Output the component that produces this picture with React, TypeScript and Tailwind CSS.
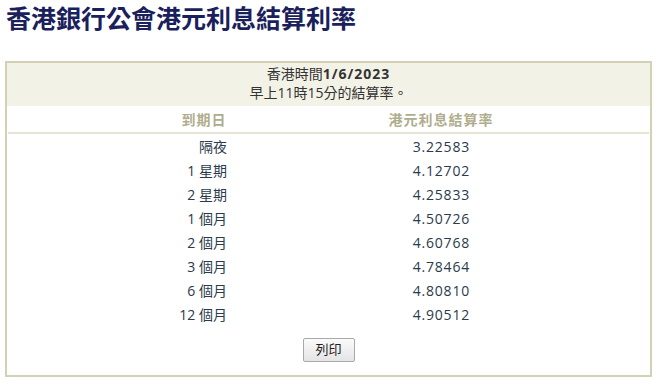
const rows = [
  { term: "隔夜", rate: "3.22583" },
  { term: "1 星期", rate: "4.12702" },
  { term: "2 星期", rate: "4.25833" },
  { term: "1 個月", rate: "4.50726" },
  { term: "2 個月", rate: "4.60768" },
  { term: "3 個月", rate: "4.78464" },
  { term: "6 個月", rate: "4.80810" },
  { term: "12 個月", rate: "4.90512" },
];

export default function App() {
  return (
    <div className="w-[657px] h-[380px] bg-white font-['Open_Sans','Noto_Sans_CJK_TC',sans-serif]">
      {/* page title */}
      <h1 className="pl-[6px] pt-[3px] text-[25px] leading-[30px] font-bold text-[#1b1f5c]">
        香港銀行公會港元利息結算利率
      </h1>

      {/* rate box */}
      <div className="mx-[5px] mt-[28px] h-[316px] border-2 border-[#d3d1b3] flex flex-col">
        <div className="bg-[#f3f2e7] pt-[1px] pb-[4px] text-center text-[14px] leading-[19px] text-[#333]">
          <p>
            香港時間<span className="font-bold tracking-[1px]">1/6/2023</span>
          </p>
          <p>早上11時15分的結算率。</p>
        </div>

        <div className="grid grid-cols-[120px_354px] ml-[137px] h-[26px] items-center text-[14px] font-bold text-[#b0ad8e]">
          <div className="text-center tracking-[1px]">到期日</div>
          <div className="text-center tracking-[1px]">港元利息結算率</div>
        </div>
        <div className="mx-[1px] h-[2px] bg-[#e6e4d2]" />

        <div className="mt-[1px] grid grid-cols-[120px_354px] ml-[137px] text-[14px] leading-[24px] text-[#2b3a4c]">
          {rows.map((r) => (
            <div key={r.term} className="contents">
              <div className="text-right pr-[37px]">{r.term}</div>
              <div className="text-right pr-[148px] tracking-[0.8px]">{r.rate}</div>
            </div>
          ))}
        </div>

        {/* print button */}
        <div className="flex justify-center mt-[11px]">
          <button className="w-[52px] h-[24px] rounded-[2px] border border-[#a9a9a9] bg-gradient-to-b from-[#fbfbfb] to-[#e4e4e4] text-[13px] text-[#222]">
            列印
          </button>
        </div>
      </div>
    </div>
  );
}
